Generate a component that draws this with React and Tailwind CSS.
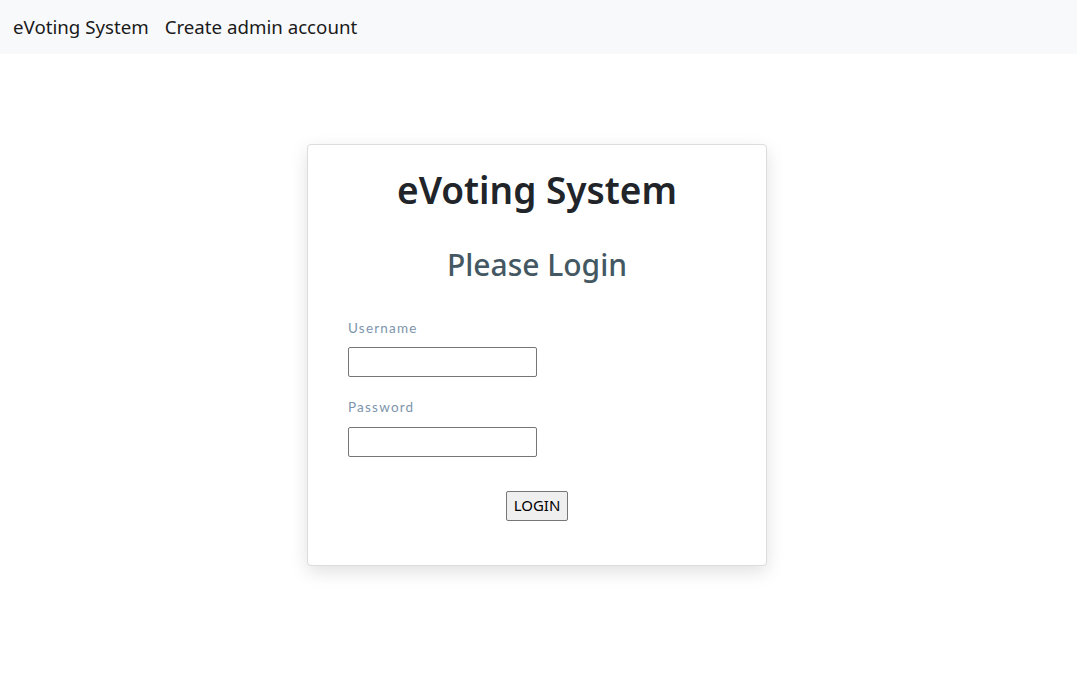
export default function App() {
  return (
    <div className="min-h-screen bg-white" style={{ fontFamily: '"Noto Sans", "Open Sans", sans-serif' }}>
      <nav className="flex h-[54px] items-center gap-[16px] bg-[#f8f9fa] px-[13px] text-[18.7px] text-[#1a1a1a]">
        <a href="#" className="leading-none">eVoting System</a>
        <a href="#" className="leading-none">Create admin account</a>
      </nav>

      <div className="flex justify-center pt-[90px] pr-[3px]">
        <div className="w-[460px] rounded border border-[#dcdcdc] bg-white px-10 pt-[21px] pb-[44px] shadow-[0_6px_18px_rgba(0,0,0,0.12)]">
          <h1 className="text-center text-[37px] font-semibold leading-[48px] text-[#212529]">eVoting System</h1>
          <h2 className="mt-[31px] text-center text-[30px] font-medium leading-[40px] text-[#435862]">Please Login</h2>

          <form className="mt-[33px]" onSubmit={(e) => e.preventDefault()}>
            <label className="block text-[13.5px] tracking-[0.09em] text-[#7d95ac]" style={{ fontFamily: 'Lato, sans-serif' }}>
              Username
            </label>
            <input
              type="text"
              className="mt-[9px] block h-[30px] w-[189px] rounded-[2px] border border-[#767676] px-1 text-sm"
            />
            <label className="mt-[20px] block text-[13.5px] tracking-[0.09em] text-[#7d95ac]" style={{ fontFamily: 'Lato, sans-serif' }}>
              Password
            </label>
            <input
              type="password"
              className="mt-[9px] block h-[30px] w-[189px] rounded-[2px] border border-[#767676] px-1 text-sm"
            />
            <div className="mt-[34px] flex justify-center">
              <button
                type="submit"
                className="h-[30px] rounded-[2px] border border-[#767676] bg-[#efefef] px-[7px] text-[15px] text-black"
              >
                LOGIN
              </button>
            </div>
          </form>
        </div>
      </div>
    </div>
  );
}
